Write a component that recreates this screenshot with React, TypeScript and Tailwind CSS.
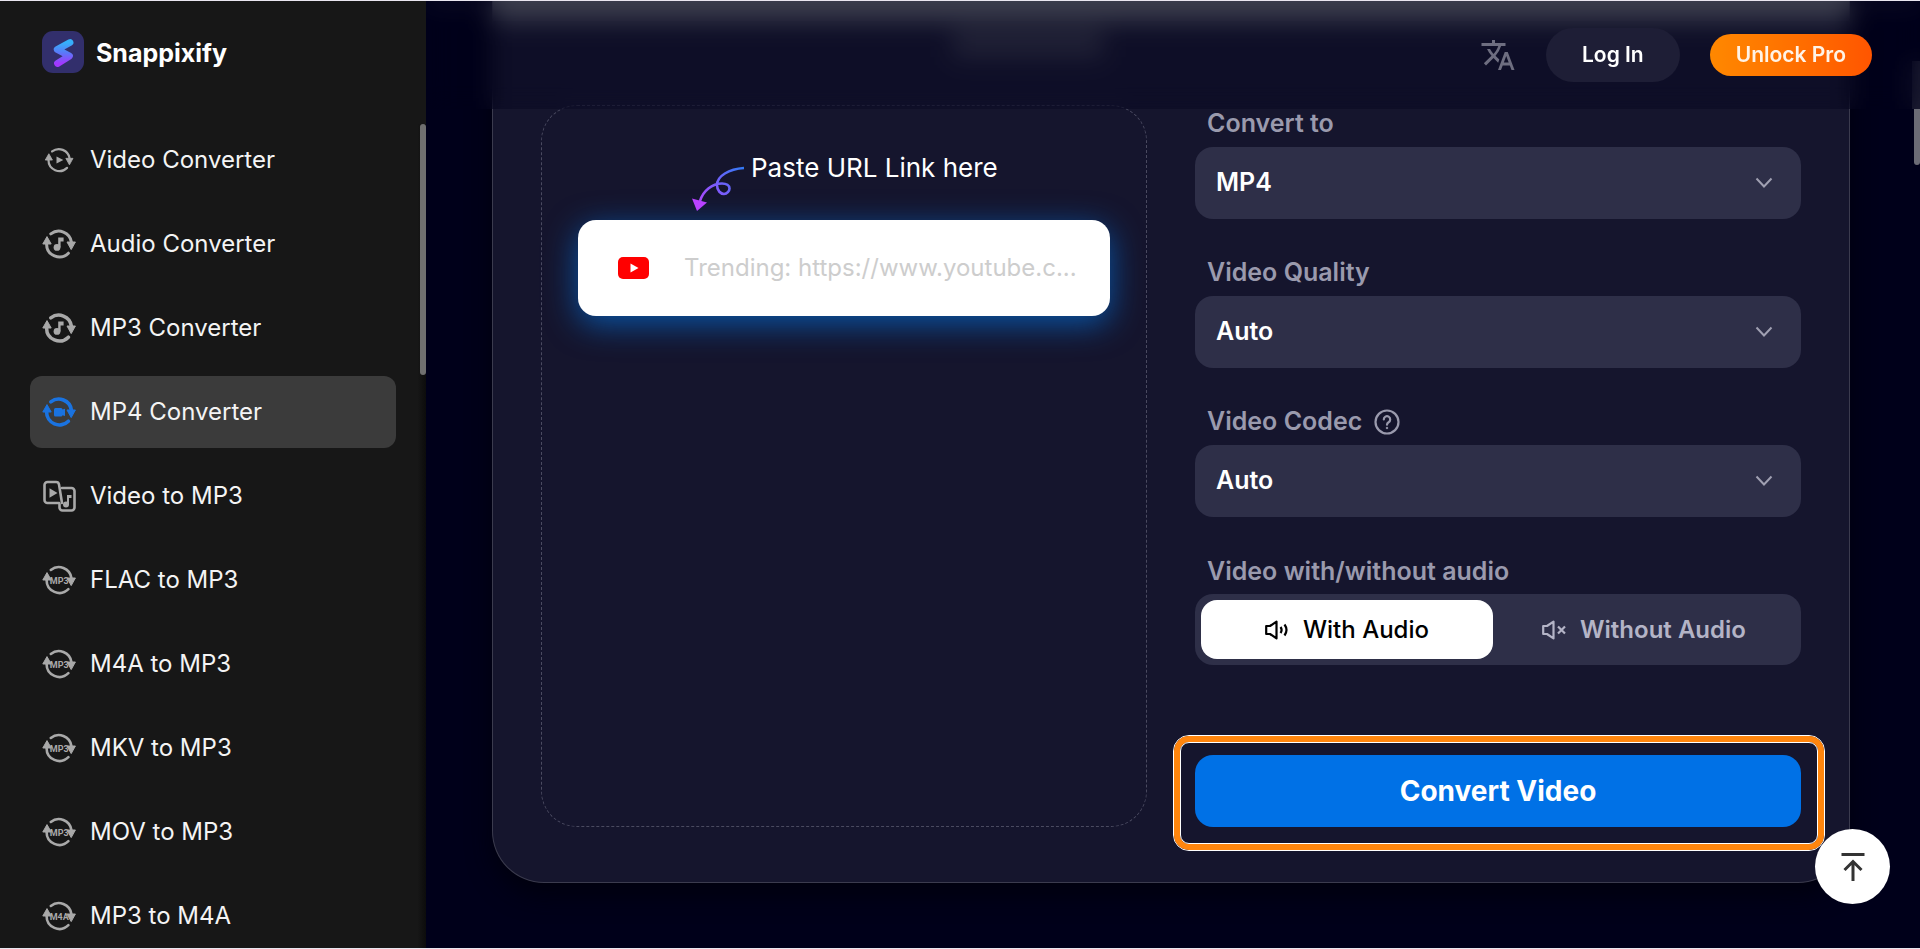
import { useState, type ReactNode } from "react";
import { MdTranslate } from "react-icons/md";

const menu = [
    { name: "Video Converter", icon: "play" },
    { name: "Audio Converter", icon: "note" },
    { name: "MP3 Converter", icon: "noteBold" },
    { name: "MP4 Converter", icon: "camera" },
    { name: "Video to MP3", icon: "files" },
    { name: "FLAC to MP3", icon: "MP3" },
    { name: "M4A to MP3", icon: "MP3" },
    { name: "MKV to MP3", icon: "MP3" },
    { name: "MOV to MP3", icon: "MP3" },
    { name: "MP3 to M4A", icon: "M4A" },
];

const Note = () => (
    <>
        <circle cx="15" cy="20.4" r="3.4" />
        <path d="M16.2 20.6V10.6h5.4v3.8h-3v6.2z" />
    </>
);

const Cycle = ({ stroke = 3, children }: { stroke?: number; children: ReactNode }) => (
    <>
        <path
            d="M8.8 6.9A12.8 12.8 0 0 1 29.4 15M4.6 17A12.8 12.8 0 0 0 26.4 26.2"
            fill="none"
            stroke="currentColor"
            strokeWidth={stroke}
            strokeLinecap="round"
        />
        <path d="M5 9.6 9.2 17H.8zM29.2 22.6 25 15h8.4z" stroke="currentColor" strokeWidth="1" strokeLinejoin="round" />
        {children}
    </>
);

const MenuIcon = ({ icon }: { icon: string }) => {
    if (icon === "files") {
        return (
            <svg className="size-[34px] shrink-0" viewBox="0 0 34 34" fill="currentColor" aria-hidden="true">
                <g fill="none" stroke="currentColor" strokeWidth="2.6" strokeLinejoin="round" strokeLinecap="round">
                    <path d="M17 24H5.5a3 3 0 0 1-3-3V6a3 3 0 0 1 3-3H14a3 3 0 0 1 3 2.4L20 24" />
                    <path d="M20 9h9.5a3 3 0 0 1 3 3v16.5a3 3 0 0 1-3 3h-9a3 3 0 0 1-3-3V25" />
                </g>
                <path d="M7.5 9.2v9.6l8-4.8z" />
                <circle cx="24" cy="25.5" r="3" />
                <path d="M25 25.5V16h4.5v3H27v6.5z" />
            </svg>
        );
    }
    return (
        <svg className="size-[34px] shrink-0" viewBox="0 0 34 34" fill="currentColor" aria-hidden="true">
            {icon === "play" && (
                <g transform="translate(2.6 2.6) scale(.85)">
                    <Cycle stroke={2.6}>
                        <path d="M14 12.8v8.4l8-4.2z" />
                    </Cycle>
                </g>
            )}
            {icon === "note" && <Cycle><Note /></Cycle>}
            {icon === "noteBold" && <Cycle stroke={3.5}><Note /></Cycle>}
            {icon === "camera" && (
                <Cycle stroke={3.6}>
                    <path d="M13.5 13H19a1.5 1.5 0 0 1 1.5 1.500l2.500-.8v7.400l-2.500-.8a1.500 1.500 0 0 1-1.500 1.200h-5.500a1.500 1.500 0 0 1-1.500-1.500v-5.500a1.500 1.500 0 0 1 1.500-1.500z" />
                </Cycle>
            )}
            {icon.startsWith("M") && (
                <Cycle stroke={2.6}>
                    <text
                        x="17.2"
                        y="20.6"
                        textAnchor="middle"
                        fontSize="9"
                        fontWeight="700"
                        fontFamily="Liberation Sans Narrow, Roboto, sans-serif"
                    >
                        {icon}
                    </text>
                </Cycle>
            )}
        </svg>
    );
};

const Logo = () => (
    <svg className="size-[42px]" viewBox="0 0 42 42" aria-hidden="true">
        <defs>
            <linearGradient id="logo-s" x1="0" y1="0" x2="0" y2="1">
                <stop offset="0" stopColor="#35b0fb" />
                <stop offset=".5" stopColor="#5a78f8" />
                <stop offset="1" stopColor="#a238ff" />
            </linearGradient>
        </defs>
        <rect width="42" height="42" rx="11" fill="#322f6c" />
        <path d="M28 11.5 15.2 18.5 27.5 25 15.5 32.5" fill="none" stroke="url(#logo-s)" strokeWidth="6.8" strokeLinecap="round" strokeLinejoin="round" />
    </svg>
);

const Sidebar = () => (
    <aside className="w-[426px] shrink-0 flex flex-col bg-[#171717]">
        <a href="#" className="h-[123px] shrink-0 flex items-start gap-3 pt-[30px] pl-[42px]">
            <Logo />
            <span className="text-[25px] leading-[44px] font-bold text-white">Snappixify</span>
        </a>
        <nav className="relative flex-1 overflow-hidden bg-linear-to-l from-[#0c0c0c] to-[#171717] to-2%">
            <ul className="flex flex-col gap-3 px-[30px]">
                {menu.map((item) => (
                    <li key={item.name}>
                        <a
                            href="#"
                            className={`flex h-[72px] items-center gap-3.5 rounded-xl px-3 text-2xl text-[#f4f4f4] ${item.icon === "camera" ? "bg-[#3b3b3b]" : ""}`}
                        >
                            <span className={item.icon === "camera" ? "text-[#1a73e0]" : "text-[#a9a9a9]"}>
                                <MenuIcon icon={item.icon} />
                            </span>
                            {item.name}
                        </a>
                    </li>
                ))}
            </ul>
            <div className="absolute right-0 top-0 h-[251px] w-1.5 rounded-full bg-[#707070]"></div>
        </nav>
    </aside>
);

const Header = () => (
    <header className="absolute inset-x-0 top-0 z-10 flex h-[108px] items-center justify-end gap-[30px] bg-[#00001a]/30 pr-12 backdrop-blur-md">
        <button aria-label="Language" className="text-[#6e6e80]">
            <MdTranslate size={36} />
        </button>
        <button className="h-[54px] rounded-full bg-[#1e1e36] px-9 text-[21px] font-semibold text-white">Log In</button>
        <button className="h-[42px] rounded-full bg-linear-to-r from-[#ff8800] to-[#ff5500] px-[26px] text-[21px] font-semibold text-[#fff3e6]">
            Unlock Pro
        </button>
    </header>
);

const HelpIcon = () => (
    <svg className="size-[26px]" viewBox="0 0 26 26" fill="none" stroke="currentColor" strokeWidth="2.2" aria-hidden="true">
        <circle cx="13" cy="13" r="11.5" />
        <path d="M9.8 10.4a3.2 3.2 0 1 1 4.8 2.8c-1.1.7-1.6 1.2-1.6 2.5" strokeLinecap="round" />
        <circle cx="13" cy="19" r=".8" fill="currentColor" strokeWidth="1" />
    </svg>
);

const SelectField = ({ id, label, value, help }: { id: string; label: string; value: string; help?: boolean }) => (
    <div>
        <div className="flex h-[42px] items-center gap-3 pl-3 pb-1 text-[25px] font-semibold text-[#9a9aad]">
            <label htmlFor={id}>{label}</label>
            {help && <HelpIcon />}
        </div>
        <div className="relative">
            <select
                id={id}
                className="block h-[72px] w-full appearance-none rounded-[18px] bg-[#2e2f48] px-[21px] text-[25px] font-semibold text-white"
            >
                <option>{value}</option>
            </select>
            <svg className="pointer-events-none absolute right-7 top-7 h-4 w-[18px]" viewBox="0 0 18 16" fill="none" stroke="#a0a0b2" strokeWidth="2" aria-hidden="true">
                <path d="M1.5 3.5 9 11.5l7.5-8" />
            </svg>
        </div>
    </div>
);

const Speaker = ({ muted }: { muted?: boolean }) => (
    <svg className="h-5 w-6" viewBox="0 0 24 20" fill="none" stroke="currentColor" strokeWidth="2.2" aria-hidden="true">
        <path d="M1.2 6H5l6.5-4.4v16.8L5 14H1.2z" strokeLinejoin="round" />
        {muted ? (
            <path d="m16 6.5 7 7m0-7-7 7" />
        ) : (
            <path d="M15.5 7q2.2 3 0 6M19.5 4.5q4 5.5 0 11" />
        )}
    </svg>
);

const AudioOption = ({ label, checked, muted, onSelect }: { label: string; checked: boolean; muted?: boolean; onSelect: () => void }) => (
    <label
        className={`flex grow cursor-pointer items-center justify-center gap-3.5 rounded-2xl text-2xl ${checked ? "basis-[290px] bg-white font-medium text-black" : "basis-[300px] font-semibold text-[#b4b4c6]"}`}
    >
        <input type="radio" name="audio" className="sr-only" checked={checked} onChange={onSelect} />
        <Speaker muted={muted} />
        {label}
    </label>
);

const UrlBox = () => (
    <div className="rounded-[36px] border border-dashed border-[#4a4a60] px-9 pt-[41px]">
        <div className="flex h-[73px] items-start pl-[113px]">
            <svg className="mt-[18px] h-[46px] w-[56px]" viewBox="0 0 56 46" fill="none" aria-hidden="true">
                <defs>
                    <linearGradient id="curl" x1="54" y1="2" x2="6" y2="42" gradientUnits="userSpaceOnUse">
                        <stop stopColor="#2f7cf6" />
                        <stop offset="1" stopColor="#b942ff" />
                    </linearGradient>
                </defs>
                <path
                    d="M53 3C38 4 26 11 26 20c0 6 4 9 7 9s5.500-3 5.500-5.500c0-3-3-5-7.500-5C21 18.500 12 26 9 36"
                    stroke="url(#curl)"
                    strokeWidth="2.6"
                />
                <path d="m1 33.500 15 4L6 46z" fill="#b942ff" />
            </svg>
            <label htmlFor="url" className="pl-1 text-[26px] leading-[42px] text-white">Paste URL Link here</label>
        </div>
        <div className="flex h-24 items-center rounded-[18px] bg-white pl-10 pr-7 shadow-[0_8px_32px_#0a55a6]">
            <svg className="h-[22px] w-[31px] shrink-0" viewBox="0 0 31 22" aria-hidden="true">
                <rect width="31" height="22" rx="5" fill="#f00" />
                <path d="M12.5 6.5v9l8-4.5z" fill="#fff" />
            </svg>
            <input
                id="url"
                type="text"
                placeholder="Trending: https://www.youtube.c..."
                className="ml-[35px] min-w-0 flex-1 text-2xl text-black outline-none placeholder:text-[#cdcdcd]"
            />
        </div>
    </div>
);

const Settings = () => {
    const [withAudio, setWithAudio] = useState(true);

    return (
        <div className="flex flex-col gap-[35px]">
            <SelectField id="format" label="Convert to" value="MP4" />
            <SelectField id="quality" label="Video Quality" value="Auto" />
            <SelectField id="codec" label="Video Codec" value="Auto" help />
            <fieldset>
                <legend className="h-[42px] pl-3 text-[25px] leading-[38px] font-semibold text-[#9a9aad]">Video with/without audio</legend>
                <div className="flex h-[71px] rounded-[18px] bg-[#2e2f48] p-1.5">
                    <AudioOption label="With Audio" checked={withAudio} onSelect={() => setWithAudio(true)} />
                    <AudioOption label="Without Audio" checked={!withAudio} onSelect={() => setWithAudio(false)} muted />
                </div>
            </fieldset>
            <div className="relative mt-[55px]">
                <button className="h-[72px] w-full rounded-[18px] bg-[#0071e6] text-[28px] font-bold text-white">Convert Video</button>
                <div className="pointer-events-none absolute -top-5 -bottom-6 -left-[22px] -right-6 rounded-2xl border border-white">
                    <div className="h-full rounded-[15px] border-[6px] border-[#ff850d]">
                        <div className="h-full rounded-[9px] border border-white"></div>
                    </div>
                </div>
            </div>
        </div>
    );
};

const App = () => {
    return (
        <div className="flex h-screen overflow-hidden border-y border-[#e9e6f0] bg-[#00001a] font-[Inter,sans-serif]">
            <Sidebar />
            <main className="relative flex-1 overflow-hidden pl-[66px] pr-[70px]">
                <Header />
                <section className="rounded-b-[52px] border border-t-0 border-[#3b3b4e] bg-[#15152d] pb-[55px] shadow-[0_12px_24px_#00000e]">
                    <div className="h-[104px]">
                        <div className="h-[20px] bg-[#50535e]"></div>
                        <div className="ml-[460px] mt-2 h-7 w-[150px] bg-[#2f3042]"></div>
                    </div>
                    <div className="grid grid-cols-2 gap-12 px-12">
                        <UrlBox />
                        <Settings />
                    </div>
                </section>
                <div className="absolute right-0 top-[60px] h-[48px] w-2 bg-[#2a2a3c]"></div>
                <div className="absolute right-0 top-[108px] h-[56px] w-1.5 rounded-b-full bg-[#6b6b75]"></div>
                <button
                    aria-label="Back to top"
                    className="absolute bottom-11 right-[30px] z-10 flex size-[75px] items-center justify-center rounded-full bg-white"
                >
                    <svg className="h-[28px] w-6" viewBox="0 0 24 28" fill="none" stroke="#333" strokeWidth="3" aria-hidden="true">
                        <path d="M.5 1.5h23M12 28V9M3.5 17 12 8.5 20.5 17" />
                    </svg>
                </button>
            </main>
        </div>
    );
};

export default App;
